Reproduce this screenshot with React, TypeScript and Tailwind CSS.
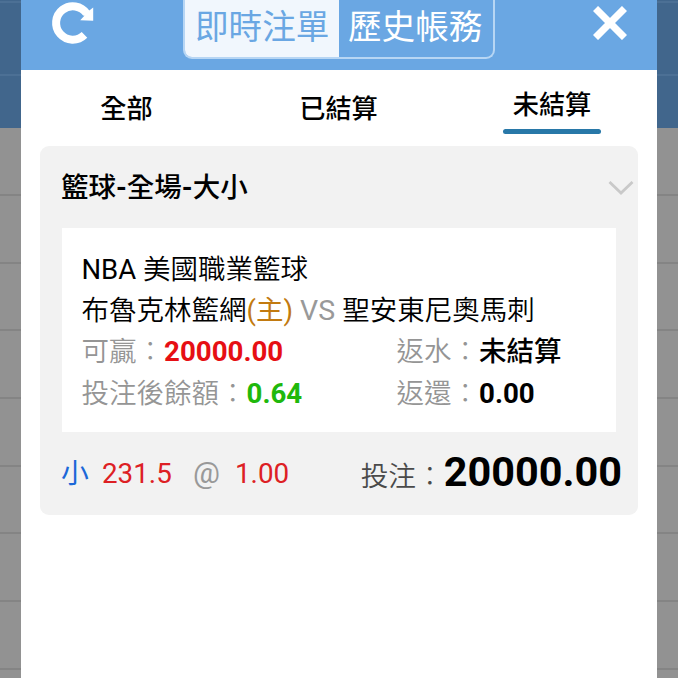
import React from 'react';

const RefreshIcon: React.FC = () => (
  <svg className="block h-[46px] w-[44px]" viewBox="0 0 44 46" fill="none">
    <path d="M35.6 13.6 A16.7 16.7 0 1 0 33.5 34.9" stroke="white" strokeWidth="8" />
    <path d="M42.2 7.6 V20.8 L29.2 20.2 L33.4 15.8 L30.5 13 L37 11.4 Z" fill="white" />
  </svg>
);

const CloseIcon: React.FC = () => (
  <svg className="block h-[34px] w-[34px]" viewBox="0 0 34 34" fill="none">
    <path d="M2.5 2.5 L31.5 31.5 M31.5 2.5 L2.5 31.5" stroke="white" strokeWidth="7.2" />
  </svg>
);

const ChevronIcon: React.FC = () => (
  <svg className="block h-[14px] w-[26px]" viewBox="0 0 26 14" fill="none">
    <path d="M1.5 1 L13 12 L24.5 1" stroke="#c9c9c9" strokeWidth="2.8" />
  </svg>
);

const tabs = [
  { label: '全部', active: false },
  { label: '已結算', active: false },
  { label: '未結算', active: true }
];

const Backdrop: React.FC = () => (
  <div className="absolute inset-0">
    <div className="h-[3px] border-b-2 border-[#4c7095] bg-[#41668c]"></div>
    <div className="h-[73px] border-b-2 border-[#4c7095] bg-[#41668c]"></div>
    <div className="h-[52px] bg-[#41668c]"></div>
    <div className="h-[68px] border-b-2 border-[#848484] bg-[#929292]"></div>
    {Array.from({ length: 8 }).map((_, index) => (
      <div key={index} className="h-[67.7px] border-b-2 border-[#848484] bg-[#929292]"></div>
    ))}
  </div>
);

const Label: React.FC<{ text: string }> = ({ text }) => (
  <span className="font-[350]">{text}<span className="font-light">：</span></span>
);

const BetCard: React.FC = () => (
  <div className="mx-[19px] h-[369px] overflow-hidden rounded-[9px] bg-[#f2f2f2]">
    <div className="flex h-[82px] items-center justify-between pl-[21px] pr-[4px] pt-[2px] font-medium">
      <h2 className="text-[27.5px]">籃球<b>-</b>全場<b>-</b>大小</h2>
      <ChevronIcon />
    </div>

    <div className="mx-[22px] h-[204px] bg-white px-[19.5px] pt-[20.5px] text-[27.5px] leading-[41.4px]">
      <p>NBA <span className="font-[350]">美國職業籃球</span></p>
      <p className="font-[350]">
        布魯克林籃網<span className="font-normal text-[#c27a10]">(主)</span>
        <span className="text-[28.5px] font-normal text-[#999999]"> VS </span>
        聖安東尼奧馬刺
      </p>
      <div className="flex text-[#959595]">
        <p className="w-[315px]">
          <Label text="可贏" />
          <span className="text-[27.7px] font-bold text-[#e60f14]">20000.00</span>
        </p>
        <p>
          <Label text="返水" />
          <span className="font-medium text-black">未結算</span>
        </p>
      </div>
      <div className="flex text-[#959595]">
        <p className="w-[315px]">
          <Label text="投注後餘額" />
          <span className="text-[27.7px] font-bold text-[#20b80c]">0.64</span>
        </p>
        <p>
          <Label text="返還" />
          <span className="text-[27.7px] font-bold text-black">0.00</span>
        </p>
      </div>
    </div>

    <div className="flex h-[83px] items-center justify-between pl-[21px] pr-[16px] text-[27.8px]">
      <div className="flex items-baseline">
        <span className="w-[41px] text-[#1c68d8]">小</span>
        <span className="w-[91px] text-[#dd2024]">231.5</span>
        <span className="w-[42px] text-[30px] leading-none text-[#999999]">@</span>
        <span className="text-[#dd2024]">1.00</span>
      </div>
      <div className="flex items-baseline pt-[2px]">
        <span className="text-[27.7px] text-[#4a4a4a]"><Label text="投注" /></span>
        <b className="text-[41.4px] leading-none">20000.00</b>
      </div>
    </div>
  </div>
);

const App: React.FC = () => {
  return (
    <div className="relative h-[678px] w-[678px] overflow-hidden bg-[#929292] font-['Roboto','Noto_Sans_CJK_TC',sans-serif] text-black">
      <Backdrop />
      <div className="relative mx-[21px] h-full bg-white">
        <header className="flex h-[70px] items-start bg-[#6aa7e3] pl-[30px]">
          <RefreshIcon />
          <div className="ml-[88px] flex h-[59px] overflow-hidden rounded-b-[9px] border-2 border-t-0 border-[#b7d6f4] text-[33.6px] leading-[56px]">
            <div className="w-[154px] bg-[#f1f7fd] pl-[10px] text-[#6aa7e3]">即時注單</div>
            <div className="w-[154px] pl-[9px] text-white">歷史帳務</div>
          </div>
          <div className="ml-[98px] pt-[6px]">
            <CloseIcon />
          </div>
        </header>

        <nav className="grid h-[76px] grid-cols-3 text-[26.2px] font-medium">
          {tabs.map((tab) => (
            <div key={tab.label} className="flex flex-col items-center">
              {tab.active ? (
                <>
                  <span className="h-[59px] pl-[2px] leading-[70px]">{tab.label}</span>
                  <span className="ml-[2px] h-[5px] w-[98px] rounded-full bg-[#2878a8]"></span>
                </>
              ) : (
                <span className="pr-[1px] leading-[78px]">{tab.label}</span>
              )}
            </div>
          ))}
        </nav>

        <BetCard />
      </div>
    </div>
  );
};

export default App;
